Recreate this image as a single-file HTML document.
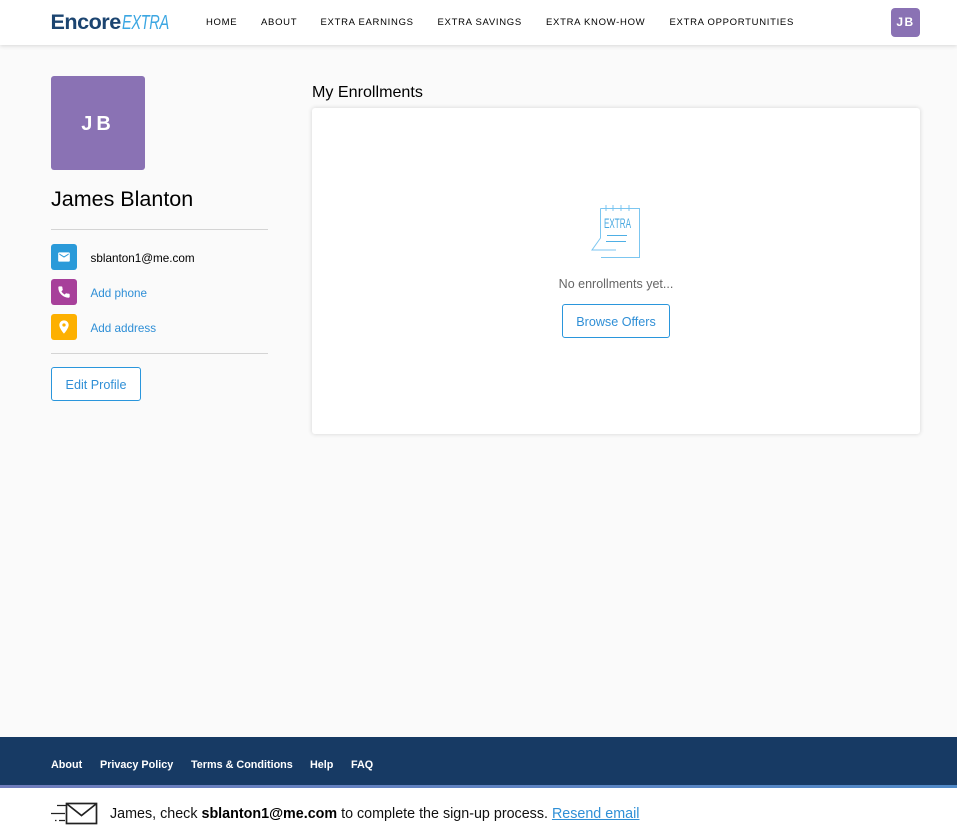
<!DOCTYPE html>
<html lang="en">
<head>
<meta charset="utf-8">
<title>Profile</title>
<style>
*{box-sizing:border-box}
html,body{margin:0;padding:0}
body{width:957px;height:839px;position:relative;overflow:hidden;background:#fafafa;font-family:"Liberation Sans",Arial,sans-serif;color:#000}
.a{position:absolute;white-space:nowrap}
a{text-decoration:none;color:inherit}
header{position:absolute;left:0;top:0;width:957px;height:45px;background:#fff;box-shadow:0 1px 4px rgba(0,0,0,.14)}
.nav{font-size:9.5px;letter-spacing:.7px;top:17px;line-height:11px;color:#000}
.ic{position:absolute;left:51px;width:26px;height:26px;border-radius:3px}
.ic svg{position:absolute;fill:#fff}
.l{left:90.5px;font-size:11.7px;line-height:14px;color:#2f8fd6}
.hr{position:absolute;left:51px;width:217px;height:1px;background:#d4d4d4}
.btn{position:absolute;border:1px solid #2a96dc;border-radius:3px;background:#fff;color:#2f8fd6;font-size:12.6px;text-align:center}
.f{font-size:10.8px;line-height:13px;font-weight:bold;color:#fff}
</style>
</head>
<body>
<header>
  <div class="a" style="left:50.5px;top:9px;font-size:21.6px;line-height:25px;font-weight:bold;color:#1b4470;letter-spacing:-.5px">Encore</div>
  <div class="a" style="left:122px;top:11px;font-size:20px;line-height:25px;font-style:italic;color:#3ba6e2;letter-spacing:-.5px;transform:scaleX(.73);transform-origin:left top">EXTRA</div>
  <a class="a nav" style="left:206px">HOME</a>
  <a class="a nav" style="left:261px">ABOUT</a>
  <a class="a nav" style="left:320.5px">EXTRA EARNINGS</a>
  <a class="a nav" style="left:437.5px">EXTRA SAVINGS</a>
  <a class="a nav" style="left:546px">EXTRA KNOW-HOW</a>
  <a class="a nav" style="left:669.5px">EXTRA OPPORTUNITIES</a>
  <div class="a" style="left:891px;top:8px;width:29px;height:29px;border-radius:4px;background:#8a72b4;color:#fff;font-size:12px;font-weight:bold;line-height:29px;text-align:center;letter-spacing:1.5px">JB</div>
</header>

<div class="a" style="left:51px;top:76px;width:94px;height:94px;border-radius:3px;background:#8a72b4"></div>
<div class="a" style="left:51px;top:77px;width:94px;height:94px;color:#fff;font-size:20px;font-weight:bold;line-height:94px;text-align:center;letter-spacing:4px">JB</div>
<div class="a" style="left:51px;top:187px;font-size:21.5px;line-height:25px">James Blanton</div>
<div class="hr" style="top:229px"></div>

<div class="ic" style="top:244px;background:#2a9ad9"><svg style="left:6px;top:6px" width="14" height="14" viewBox="0 0 24 24"><path d="M20 4H4c-1.100 0-2 .9-2 2v12c0 1.100.9 2 2 2h16c1.100 0 2-.9 2-2V6c0-1.100-.9-2-2-2zm0 4l-8 5-8-5V6l8 5 8-5v2z"/></svg></div>
<div class="a l" style="top:252px;color:#000">sblanton1@me.com</div>
<div class="ic" style="top:279px;background:#a7409a"><svg style="left:6px;top:6px;stroke:#fff;stroke-width:1.500" width="14" height="14" viewBox="0 0 24 24"><path d="M6.600 10.800c1.400 2.800 3.800 5.100 6.600 6.600l2.200-2.200c.3-.3.700-.4 1-.2 1.100.4 2.300.6 3.600.6.600 0 1 .4 1 1V20c0 .6-.4 1-1 1C10.600 21 3 13.400 3 4c0-.6.400-1 1-1h3.500c.6 0 1 .4 1 1 0 1.300.2 2.500.6 3.600.1.300 0 .7-.2 1l-2.300 2.200z"/></svg></div>
<a class="a l" style="top:287px">Add phone</a>
<div class="ic" style="top:314px;background:#fdb000"><svg style="left:5px;top:5px" width="16" height="16" viewBox="0 0 24 24"><path d="M12 2C8.100 2 5 5.100 5 9c0 5.200 7 13 7 13s7-7.800 7-13c0-3.900-3.100-7-7-7zm0 9.500a2.500 2.500 0 1 1 0-5 2.500 2.500 0 0 1 0 5z"/></svg></div>
<a class="a l" style="top:322px">Add address</a>
<div class="hr" style="top:353px"></div>
<a class="btn" style="left:51px;top:367px;width:90px;height:34px;line-height:34px">Edit Profile</a>

<div class="a" style="left:312px;top:83px;font-size:16.1px;line-height:19px">My Enrollments</div>
<div class="a" style="left:312px;top:108px;width:608px;height:326px;background:#fff;border-radius:3px;box-shadow:0 0 5px rgba(0,0,0,.16)"></div>

<svg class="a" style="left:586px;top:200px" width="60" height="62" viewBox="0 0 60 62" fill="none" stroke="#6ec0ee" stroke-width="1">
  <path d="M14.500 8.500H53.500V57.500H15" opacity=".9"/>
  <path d="M14.500 8.500V38L6 50H30" opacity=".9"/>
  <path d="M20 5V11M27 5V11M35 5V11M43 5V11" opacity=".9"/>
  <path d="M21 35.500H41M20 41.500H40" stroke="#3ba6e2" opacity=".9"/>
  <text x="18" y="28" font-family="Liberation Sans,sans-serif" font-size="13.500" fill="#4aa9e0" stroke="none" textLength="27" lengthAdjust="spacingAndGlyphs">EXTRA</text>
</svg>
<div class="a" style="left:312px;top:277px;width:608px;text-align:center;font-size:12.5px;line-height:14px;color:#666">No enrollments yet...</div>
<a class="btn" style="left:562px;top:304px;width:108px;height:34px;line-height:34px">Browse Offers</a>

<div class="a" style="left:0;top:737px;width:957px;height:48px;background:#173a64"></div>
<a class="a f" style="left:51px;top:758.500px">About</a>
<a class="a f" style="left:100px;top:758.500px">Privacy Policy</a>
<a class="a f" style="left:191px;top:758.500px">Terms &amp; Conditions</a>
<a class="a f" style="left:310px;top:758.500px">Help</a>
<a class="a f" style="left:351px;top:758.500px">FAQ</a>
<div class="a" style="left:0;top:785px;width:957px;height:3px;background:linear-gradient(90deg,#6f7cbc,#4f88c6)"></div>
<div class="a" style="left:0;top:788px;width:957px;height:51px;background:#fff"></div>

<svg class="a" style="left:50px;top:802px" width="48" height="23" viewBox="0 0 48 23" fill="none" stroke="#222">
  <rect x="16.500" y="1.500" width="30" height="20" stroke-width="1.700"/>
  <path d="M17 2L31.500 13.500L46 2" stroke-width="1.700"/>
  <path d="M7 3.500H16M1 11.500H15M5 18.500H6.500M9 18.500H15" stroke-width="1.200"/>
</svg>
<div class="a" style="left:110px;top:806px;font-size:14.32px;line-height:17px;color:#111">James, check <b style="color:#000">sblanton1@me.com</b> to complete the sign-up process. <a style="color:#2f8fd6;text-decoration:underline">Resend email</a></div>
</body>
</html>
